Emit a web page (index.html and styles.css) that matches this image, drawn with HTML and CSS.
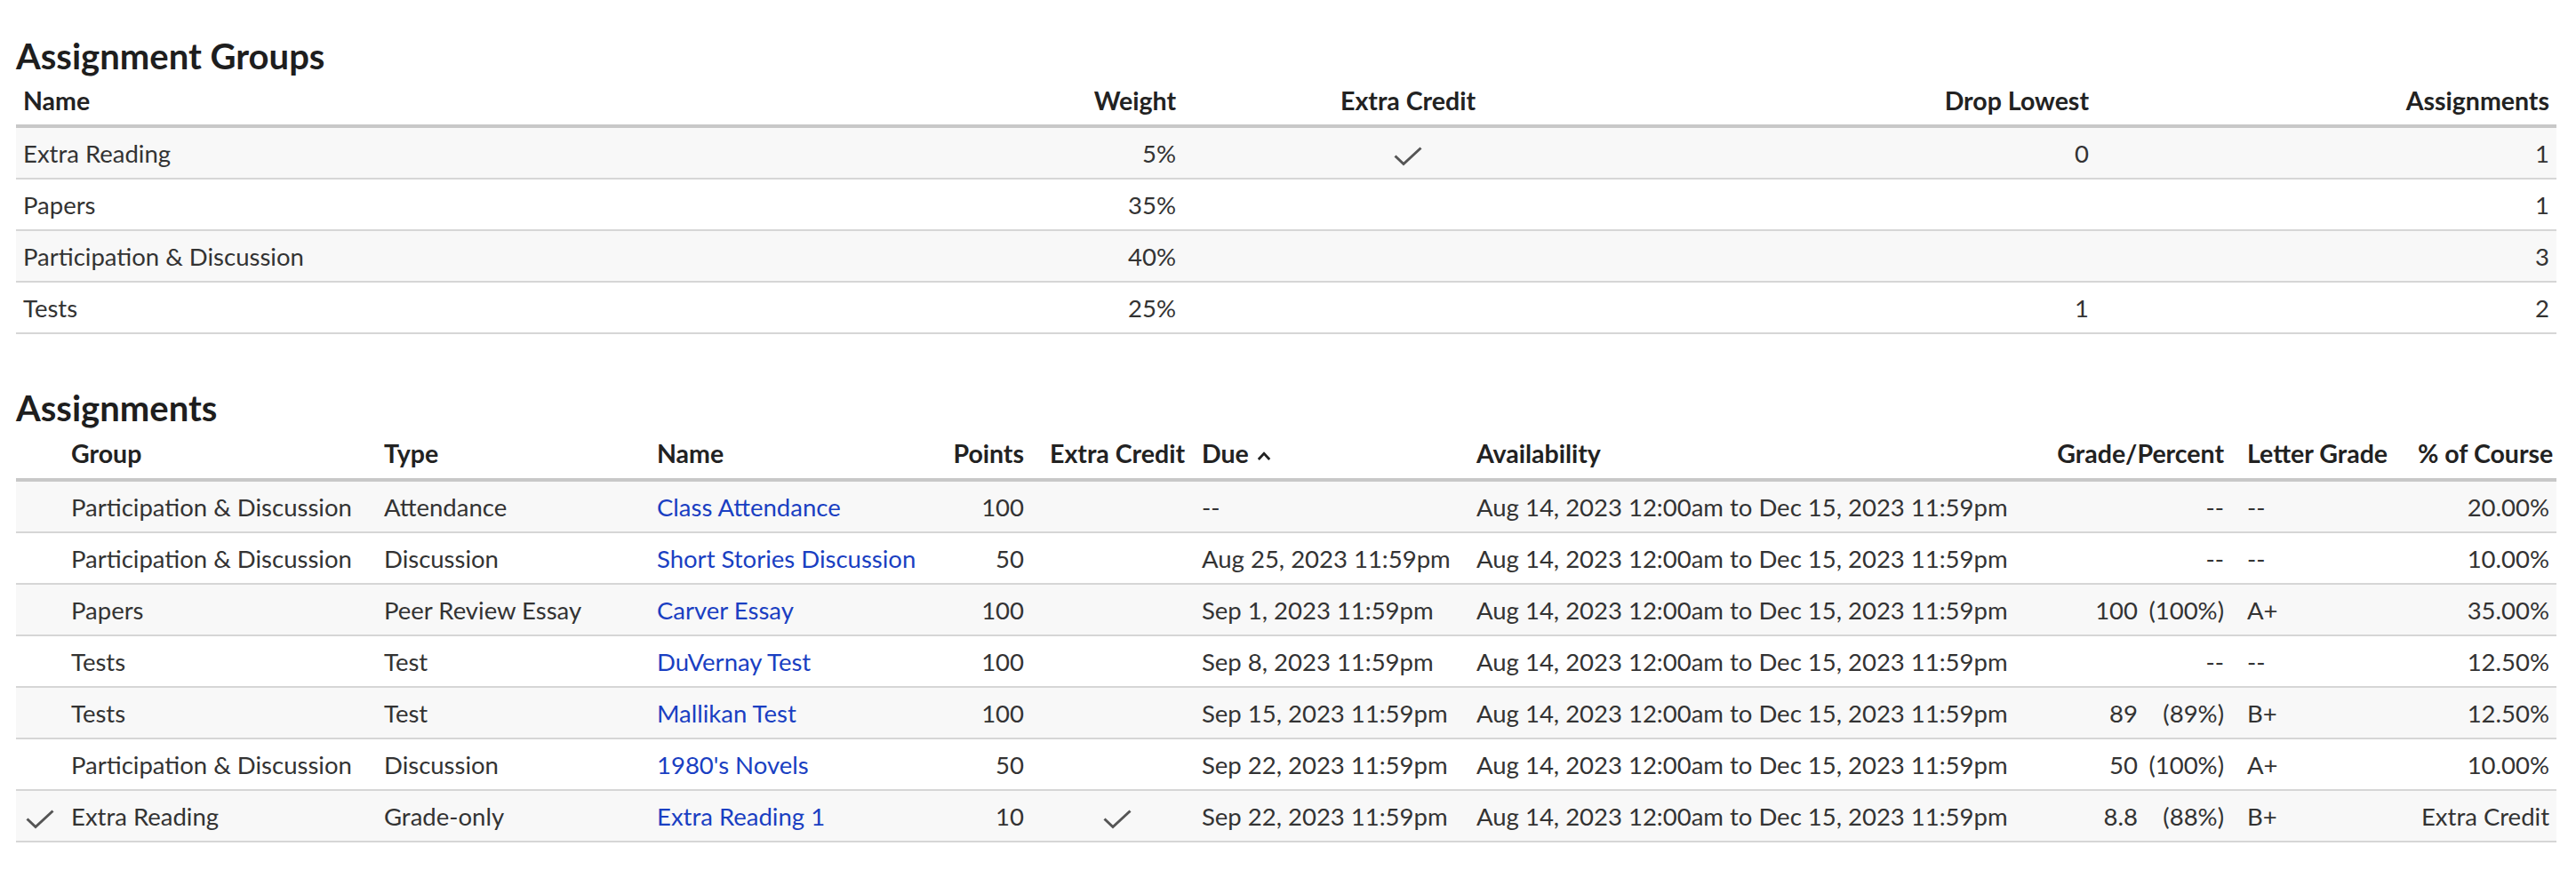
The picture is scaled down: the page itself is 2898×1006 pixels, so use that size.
FILE: index.html
```html
<!DOCTYPE html>
<html lang="en">
<head>
<meta charset="utf-8">
<title>Assignment Groups</title>
<link rel="stylesheet" href="styles.css">
</head>
<body>
<main class="page">
  <section class="section">
    <h2 class="section-title">Assignment Groups</h2>
    <table class="grid groups">
      <colgroup>
        <col class="g-name"><col class="g-weight"><col class="g-extra"><col class="g-drop"><col class="g-count">
      </colgroup>
      <thead>
        <tr>
          <th class="left">Name</th>
          <th class="right">Weight</th>
          <th class="center">Extra Credit</th>
          <th class="right">Drop Lowest</th>
          <th class="right">Assignments</th>
        </tr>
      </thead>
      <tbody>
        <tr>
          <td class="left">Extra Reading</td>
          <td class="right">5%</td>
          <td class="center"><svg class="check" viewBox="0 0 32 22" width="32" height="22"><path d="M1.5 10.5 L11 19.5 L30.5 1.5"/></svg></td>
          <td class="right">0</td>
          <td class="right">1</td>
        </tr>
        <tr>
          <td class="left">Papers</td>
          <td class="right">35%</td>
          <td class="center"></td>
          <td class="right"></td>
          <td class="right">1</td>
        </tr>
        <tr>
          <td class="left">Participation &amp; Discussion</td>
          <td class="right">40%</td>
          <td class="center"></td>
          <td class="right"></td>
          <td class="right">3</td>
        </tr>
        <tr>
          <td class="left">Tests</td>
          <td class="right">25%</td>
          <td class="center"></td>
          <td class="right">1</td>
          <td class="right">2</td>
        </tr>
      </tbody>
    </table>
  </section>

  <section class="section second">
    <h2 class="section-title">Assignments</h2>
    <table class="grid assignments">
      <colgroup>
        <col class="a-check"><col class="a-group"><col class="a-type"><col class="a-name"><col class="a-points"><col class="a-extra"><col class="a-due"><col class="a-avail"><col class="a-grade"><col class="a-letter"><col class="a-course">
      </colgroup>
      <thead>
        <tr>
          <th></th>
          <th class="left">Group</th>
          <th class="left">Type</th>
          <th class="left">Name</th>
          <th class="right points">Points</th>
          <th class="center">Extra Credit</th>
          <th class="left">Due<svg class="caret" viewBox="0 0 16 10" width="16" height="10"><path d="M1.8 9 L8 2.4 L14.2 9"/></svg></th>
          <th class="left">Availability</th>
          <th class="right grade">Grade/Percent</th>
          <th class="left">Letter Grade</th>
          <th class="right">% of Course</th>
        </tr>
      </thead>
      <tbody>
        <tr>
          <td></td>
          <td class="left">Participation &amp; Discussion</td>
          <td class="left">Attendance</td>
          <td class="left"><a class="link" href="#">Class Attendance</a></td>
          <td class="right points">100</td>
          <td class="center"></td>
          <td class="left">--</td>
          <td class="left">Aug 14, 2023 12:00am to Dec 15, 2023 11:59pm</td>
          <td class="right grade">--</td>
          <td class="left">--</td>
          <td class="right">20.00%</td>
        </tr>
        <tr>
          <td></td>
          <td class="left">Participation &amp; Discussion</td>
          <td class="left">Discussion</td>
          <td class="left"><a class="link" href="#">Short Stories Discussion</a></td>
          <td class="right points">50</td>
          <td class="center"></td>
          <td class="left">Aug 25, 2023 11:59pm</td>
          <td class="left">Aug 14, 2023 12:00am to Dec 15, 2023 11:59pm</td>
          <td class="right grade">--</td>
          <td class="left">--</td>
          <td class="right">10.00%</td>
        </tr>
        <tr>
          <td></td>
          <td class="left">Papers</td>
          <td class="left">Peer Review Essay</td>
          <td class="left"><a class="link" href="#">Carver Essay</a></td>
          <td class="right points">100</td>
          <td class="center"></td>
          <td class="left">Sep 1, 2023 11:59pm</td>
          <td class="left">Aug 14, 2023 12:00am to Dec 15, 2023 11:59pm</td>
          <td class="right grade"><span class="score">100</span><span class="pct">(100%)</span></td>
          <td class="left">A+</td>
          <td class="right">35.00%</td>
        </tr>
        <tr>
          <td></td>
          <td class="left">Tests</td>
          <td class="left">Test</td>
          <td class="left"><a class="link" href="#">DuVernay Test</a></td>
          <td class="right points">100</td>
          <td class="center"></td>
          <td class="left">Sep 8, 2023 11:59pm</td>
          <td class="left">Aug 14, 2023 12:00am to Dec 15, 2023 11:59pm</td>
          <td class="right grade">--</td>
          <td class="left">--</td>
          <td class="right">12.50%</td>
        </tr>
        <tr>
          <td></td>
          <td class="left">Tests</td>
          <td class="left">Test</td>
          <td class="left"><a class="link" href="#">Mallikan Test</a></td>
          <td class="right points">100</td>
          <td class="center"></td>
          <td class="left">Sep 15, 2023 11:59pm</td>
          <td class="left">Aug 14, 2023 12:00am to Dec 15, 2023 11:59pm</td>
          <td class="right grade"><span class="score">89</span><span class="pct">(89%)</span></td>
          <td class="left">B+</td>
          <td class="right">12.50%</td>
        </tr>
        <tr>
          <td></td>
          <td class="left">Participation &amp; Discussion</td>
          <td class="left">Discussion</td>
          <td class="left"><a class="link" href="#">1980's Novels</a></td>
          <td class="right points">50</td>
          <td class="center"></td>
          <td class="left">Sep 22, 2023 11:59pm</td>
          <td class="left">Aug 14, 2023 12:00am to Dec 15, 2023 11:59pm</td>
          <td class="right grade"><span class="score">50</span><span class="pct">(100%)</span></td>
          <td class="left">A+</td>
          <td class="right">10.00%</td>
        </tr>
        <tr>
          <td class="center"><svg class="check" viewBox="0 0 32 22" width="32" height="22"><path d="M1.5 10.5 L11 19.5 L30.5 1.5"/></svg></td>
          <td class="left">Extra Reading</td>
          <td class="left">Grade-only</td>
          <td class="left"><a class="link" href="#">Extra Reading 1</a></td>
          <td class="right points">10</td>
          <td class="center"><svg class="check" viewBox="0 0 32 22" width="32" height="22"><path d="M1.5 10.5 L11 19.5 L30.5 1.5"/></svg></td>
          <td class="left">Sep 22, 2023 11:59pm</td>
          <td class="left">Aug 14, 2023 12:00am to Dec 15, 2023 11:59pm</td>
          <td class="right grade"><span class="score">8.8</span><span class="pct">(88%)</span></td>
          <td class="left">B+</td>
          <td class="right">Extra Credit</td>
        </tr>
      </tbody>
    </table>
  </section>
</main>
</body>
</html>
```

FILE: styles.css
```css
* {
  box-sizing: border-box;
}

html, body {
  margin: 0;
  padding: 0;
  background: #ffffff;
}

body {
  font-family: Lato, "Open Sans", "Liberation Sans", sans-serif;
  color: #333333;
  font-size: 27.5px;
}

.page {
  padding: 41px 22px 40px 18px;
}

.section.second {
  margin-top: 61px;
}

.section-title {
  margin: 0;
  font-size: 40px;
  line-height: 44px;
  font-weight: 700;
  color: #1e1e1e;
}

.grid {
  width: 2858px;
  border-collapse: collapse;
  table-layout: fixed;
  margin-top: 11px;
}

.grid th {
  font-size: 28.5px;
  font-weight: 700;
  color: #222222;
  line-height: 35px;
  padding: 0 8px 9px 8px;
  border-bottom: 4px solid #c8c8c8;
  white-space: nowrap;
}

.grid td {
  color: #333333;
  line-height: 35px;
  padding: 11px 8px 10px 8px;
  border-bottom: 2px solid #d6d6d6;
  white-space: nowrap;
  vertical-align: middle;
}

.grid tbody tr:nth-child(odd) {
  background: #f8f8f8;
}

.left { text-align: left; }
.right { text-align: right; }
.center { text-align: center; }

.groups .g-name { width: 1193px; }
.groups .g-weight { width: 120px; }
.groups .g-extra { width: 506px; }
.groups .g-drop { width: 521px; }
.groups .g-count { width: 518px; }

.assignments { margin-top: 12px; }
.assignments th { padding-bottom: 10px; }

.assignments .a-check { width: 54px; }
.assignments .a-group { width: 352px; }
.assignments .a-type { width: 307px; }
.assignments .a-name { width: 329px; }
.assignments .a-points { width: 110px; }
.assignments .a-extra { width: 174px; }
.assignments .a-due { width: 309px; }
.assignments .a-avail { width: 647px; }
.assignments .a-grade { width: 220px; }
.assignments .a-letter { width: 192px; }
.assignments .a-course { width: 164px; }

.grid .points { padding-right: 18px; }
.grid .grade { padding-right: 18px; }

.grid td .link {
  color: #1a3fc2;
  text-decoration: none;
}

.check {
  display: inline-block;
  vertical-align: middle;
}

.check path {
  fill: none;
  stroke: #555555;
  stroke-width: 3;
}

.caret {
  display: inline-block;
  margin-left: 9px;
  vertical-align: 3px;
}

.caret path {
  fill: none;
  stroke: #222222;
  stroke-width: 2.8;
}

.pct {
  display: inline-block;
  min-width: 85px;
  margin-left: 12px;
  text-align: right;
}
```
